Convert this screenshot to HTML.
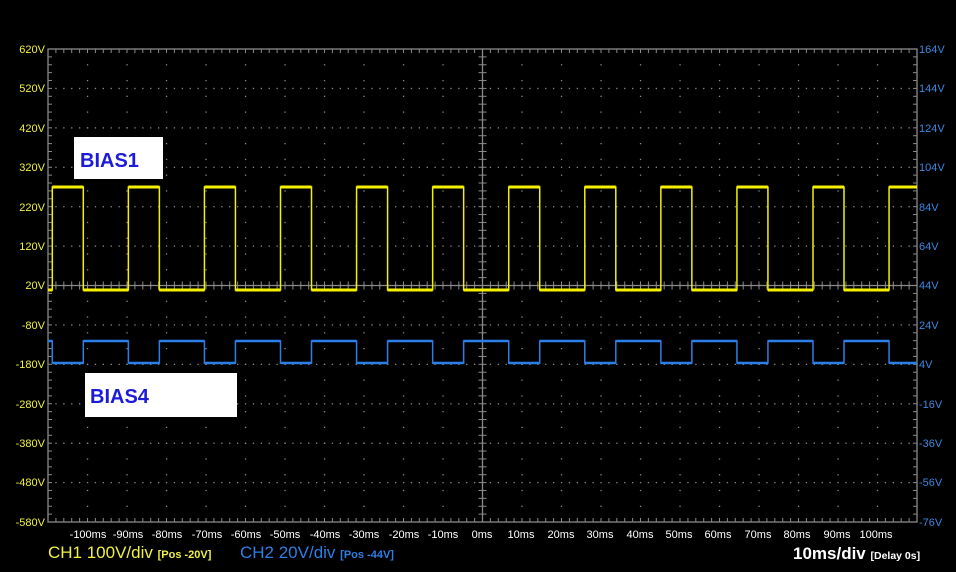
<!DOCTYPE html>
<html><head><meta charset="utf-8"><style>
html,body{margin:0;padding:0;background:#000;width:956px;height:572px;overflow:hidden}
svg{display:block}
text{font-family:"Liberation Sans",sans-serif}
.yl{fill:#f0f040;font-size:11px}
.bl{fill:#3a88e0;font-size:11px}
.xl{fill:#fff;font-size:11px}
</style></head><body>
<svg id="s" width="956" height="572" viewBox="0 0 956 572">
<rect width="956" height="572" fill="#000"/>
<g id="grid"></g>
<rect x="48" y="49" width="869" height="473" fill="none" stroke="#8a8a8a" stroke-width="1.3"/>
<line x1="48" y1="285.5" x2="917" y2="285.5" stroke="#8a8a8a" stroke-width="1.3"/>
<line x1="482.5" y1="49" x2="482.5" y2="522" stroke="#8a8a8a" stroke-width="1.3"/>
<path id="yel" fill="none" stroke="#f4f000" stroke-width="1.5"/>
<path id="yelh" fill="none" stroke="#f4f000" stroke-width="3"/>
<path id="blu" fill="none" stroke="#2c7fe6" stroke-width="1.5"/>
<path id="bluh" fill="none" stroke="#2c7fe6" stroke-width="2.5"/>
<rect x="74" y="137" width="89" height="42" fill="#fff"/>
<text x="80" y="167" style="font-size:20px;font-weight:bold;fill:#1c1cd8">BIAS1</text>
<rect x="85" y="373" width="152" height="44" fill="#fff"/>
<text x="90" y="403" style="font-size:20px;font-weight:bold;fill:#1c1cd8">BIAS4</text>
<g class="yl" text-anchor="end">
<text x="45" y="53">620V</text><text x="45" y="92">520V</text><text x="45" y="132">420V</text>
<text x="45" y="171">320V</text><text x="45" y="211">220V</text><text x="45" y="250">120V</text>
<text x="45" y="289">20V</text><text x="45" y="329">-80V</text><text x="45" y="368">-180V</text>
<text x="45" y="408">-280V</text><text x="45" y="447">-380V</text><text x="45" y="486">-480V</text>
<text x="45" y="526">-580V</text></g>
<g class="bl">
<text x="919" y="53">164V</text><text x="919" y="92">144V</text><text x="919" y="132">124V</text>
<text x="919" y="171">104V</text><text x="919" y="211">84V</text><text x="919" y="250">64V</text>
<text x="919" y="289">44V</text><text x="919" y="329">24V</text><text x="919" y="368">4V</text>
<text x="919" y="408">-16V</text><text x="919" y="447">-36V</text><text x="919" y="486">-56V</text>
<text x="919" y="526">-76V</text></g>
<g class="xl" text-anchor="middle">
<text x="88" y="538">-100ms</text><text x="128" y="538">-90ms</text><text x="167" y="538">-80ms</text>
<text x="207" y="538">-70ms</text><text x="246" y="538">-60ms</text><text x="285" y="538">-50ms</text>
<text x="325" y="538">-40ms</text><text x="364" y="538">-30ms</text><text x="404" y="538">-20ms</text>
<text x="443" y="538">-10ms</text><text x="482" y="538">0ms</text><text x="521" y="538">10ms</text>
<text x="561" y="538">20ms</text><text x="600" y="538">30ms</text><text x="640" y="538">40ms</text>
<text x="679" y="538">50ms</text><text x="718" y="538">60ms</text><text x="758" y="538">70ms</text>
<text x="797" y="538">80ms</text><text x="837" y="538">90ms</text><text x="876" y="538">100ms</text></g>
<text x="48" y="558" style="fill:#f0f040;font-size:17px">CH1 100V/div <tspan style="font-size:11px;font-weight:bold">[Pos -20V]</tspan></text>
<text x="240" y="558" style="fill:#2c7fe6;font-size:17px">CH2 20V/div <tspan style="font-size:11px;font-weight:bold">[Pos -44V]</tspan></text>
<text x="793" y="559" style="fill:#fff;font-size:17px;font-weight:bold">10ms/div <tspan style="font-size:10.5px">[Delay 0s]</tspan></text>
</svg>
<script>
var NS="http://www.w3.org/2000/svg",g=document.getElementById('grid');
function ln(x1,y1,x2,y2){var l=document.createElementNS(NS,'line');l.setAttribute('x1',x1);l.setAttribute('y1',y1);l.setAttribute('x2',x2);l.setAttribute('y2',y2);l.setAttribute('stroke','#8a8a8a');l.setAttribute('stroke-width','1');g.appendChild(l);}
function dot(x,y){var r=document.createElementNS(NS,'rect');r.setAttribute('x',x-0.6);r.setAttribute('y',y-0.6);r.setAttribute('width',1.3);r.setAttribute('height',1.3);r.setAttribute('fill','#8a8a8a');g.appendChild(r);}
var L=48,R=917,T=49,B=522,cx=482.5,cy=285.5,dx=869/22,dy=473/12,sx=dx/5,sy=dy/5;
for(var i=1;i<22;i++){var x=L+i*dx;for(var j=1;j<30;j++){dot(x,T+j*dy/2.5);}}
for(var j=1;j<12;j++){var y=T+j*dy;for(var i=1;i<110;i++){dot(L+i*sx,y);}}
for(var i=1;i<110;i++){var x=L+i*sx;ln(x,T,x,T+4);ln(x,B,x,B-4);ln(x,cy-4,x,cy+4);}
for(var j=1;j<60;j++){var y=T+j*sy;ln(L,y,L+4,y);ln(R,y,R-4,y);ln(cx-4,y,cx+4,y);}
var yd="M48,290",bd="M48,341",yh="",bh="",H=187,Lo=290,BH=341,BL=363,px=48;
for(var k=0;k<12;k++){var r=52.3+76.07*k,f=r+31;
 yd+=" L"+r+","+Lo+" L"+r+","+H;bd+=" L"+r+","+BH+" L"+r+","+BL;
 yh+=" M"+px+","+Lo+" L"+r+","+Lo;bh+=" M"+px+","+BH+" L"+r+","+BH;
 var fe=Math.min(f,917);
 yh+=" M"+r+","+H+" L"+fe+","+H;bh+=" M"+r+","+BL+" L"+fe+","+BL;
 if(f<917){yd+=" L"+f+","+H+" L"+f+","+Lo;bd+=" L"+f+","+BL+" L"+f+","+BH;px=f;}
 else{yd+=" L917,"+H;bd+=" L917,"+BL;}}
document.getElementById('yel').setAttribute('d',yd);
document.getElementById('blu').setAttribute('d',bd);
document.getElementById('yelh').setAttribute('d',yh);
document.getElementById('bluh').setAttribute('d',bh);
</script>
</body></html>
